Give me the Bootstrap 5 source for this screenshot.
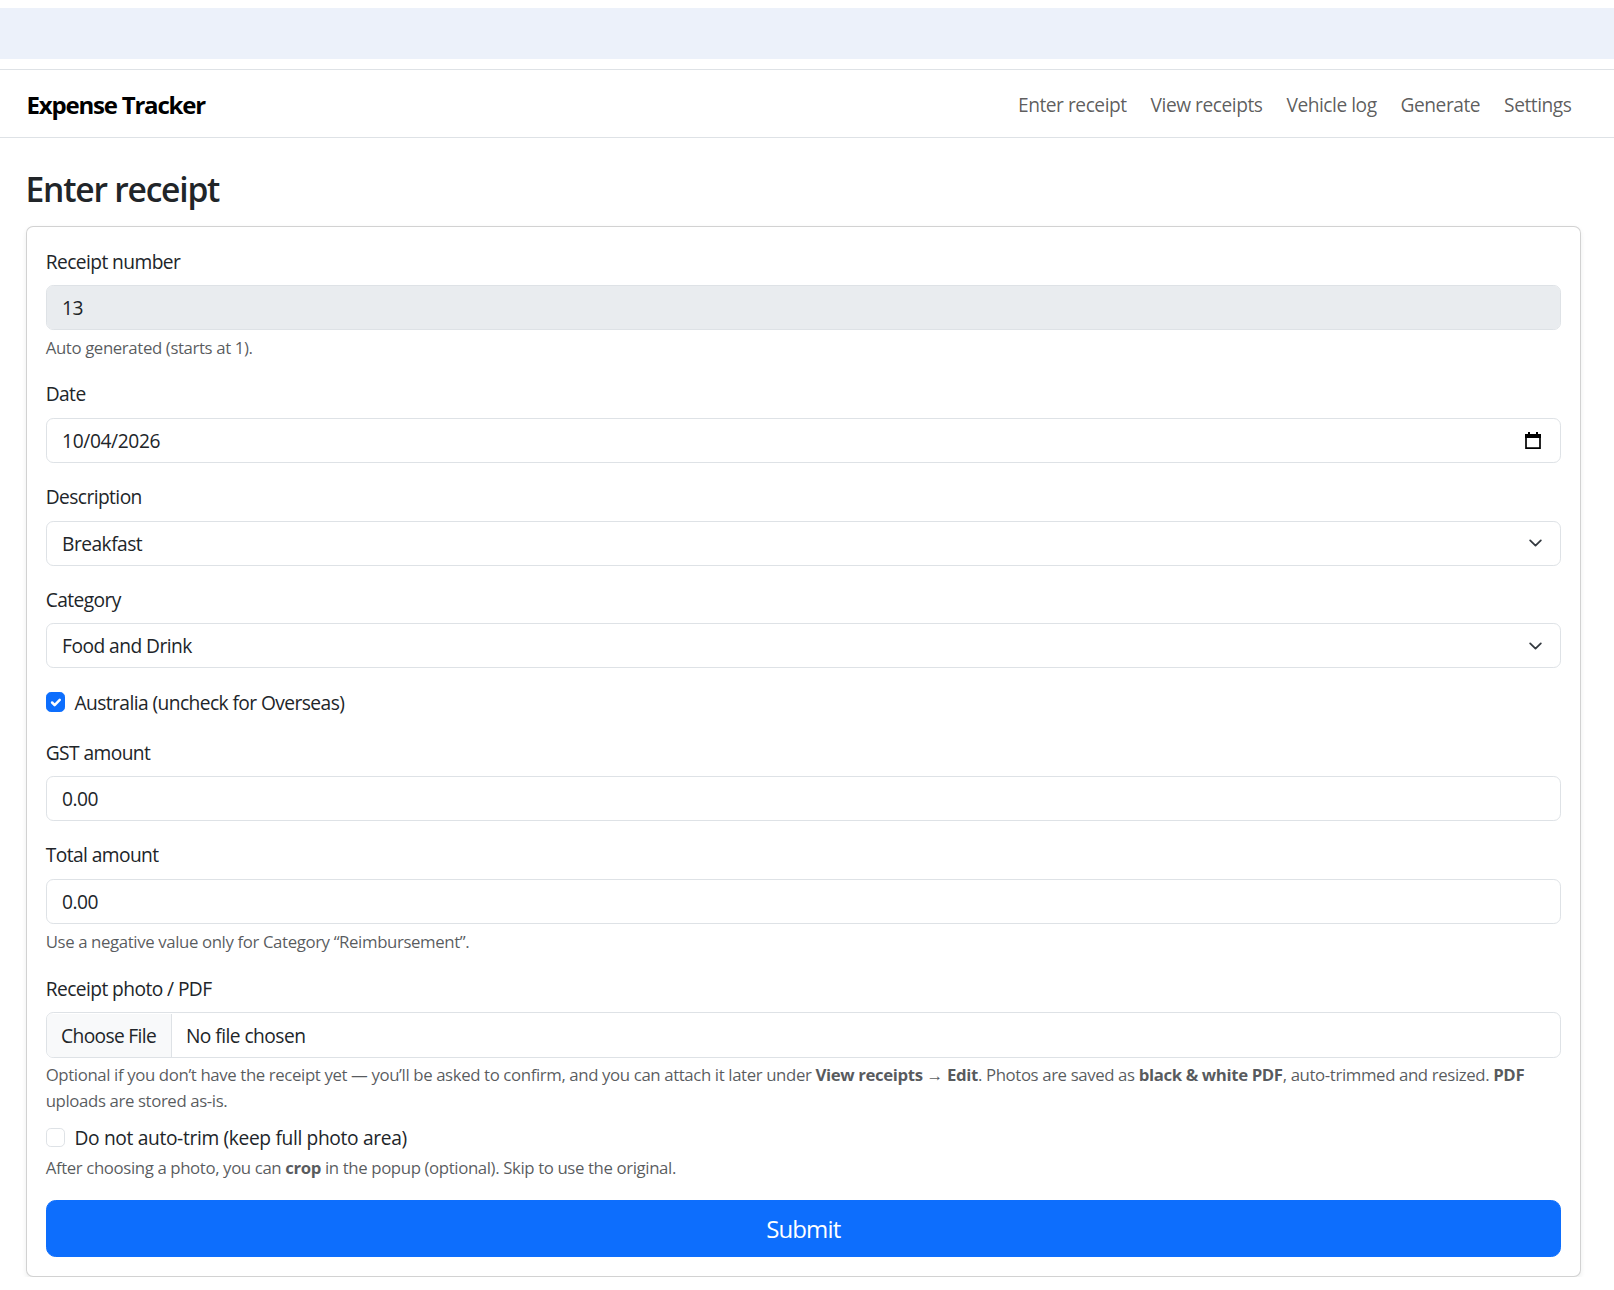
<!DOCTYPE html>
<html lang="en">
  <head>
    <meta charset="UTF-8" />
    <meta name="viewport" content="width=device-width, initial-scale=1.0" />
    <title>Enter receipt</title>
    <link href="https://cdn.jsdelivr.net/npm/bootstrap@5.3.0/dist/css/bootstrap.min.css" rel="stylesheet" />
    <style>
      html {
        font-size: 19.2px;
      }
      body {
        font-family: "Open Sans", "Noto Sans", sans-serif;
        letter-spacing: -0.025em;
      }
      .top-band {
        height: 51px;
        margin: 8px 0 10px;
        background-color: #ecf1fa;
      }
      .app-nav {
        border-top: 1px solid #dee2e6;
        border-bottom: 1px solid #dee2e6;
      }
      .app-nav .container-fluid {
        padding-left: 26.5px;
        padding-right: 33px;
      }
      .app-nav .navbar-brand {
        letter-spacing: -0.05em;
        padding-top: calc(0.3125rem + 1px);
        padding-bottom: calc(0.3125rem - 1px);
      }
      .app-nav .nav-link {
        padding-top: calc(0.5rem + 2px);
        padding-bottom: calc(0.5rem - 2px);
      }
      .page-body {
        padding-left: 25.5px;
        padding-right: 33px;
      }
      .page-title {
        font-weight: 600;
        letter-spacing: -0.036em;
        padding-top: 2px;
        margin-bottom: calc(1rem - 2px);
      }
      .form-label {
        letter-spacing: -0.03em;
        padding-top: 1px;
        margin-bottom: calc(0.5rem - 1px);
      }
      .form-check-label {
        letter-spacing: -0.03em;
        padding-top: 1px;
      }
      .form-check-label.trim-label {
        letter-spacing: -0.018em;
      }
      .form-control,
      .form-select {
        letter-spacing: -0.028em;
        padding-top: calc(0.375rem + 1px);
        padding-bottom: calc(0.375rem - 1px);
      }
      .form-control:not([type="file"]),
      .form-select {
        padding-left: calc(0.75rem + 1px);
      }
      .form-control.date-field {
        letter-spacing: -0.02em;
      }
      .form-control[type="file"]::file-selector-button {
        letter-spacing: -0.034em;
      }
      .form-select {
        background-position: right 14.4px center;
        background-size: 19.2px 14.4px;
      }
      .form-text {
        letter-spacing: -0.023em;
      }
      .btn-lg {
        letter-spacing: -0.036em;
        padding-top: calc(0.5rem + 1px);
        padding-bottom: calc(0.5rem - 1px);
      }
      .check-gap {
        margin-bottom: calc(1rem + 1px);
      }
      .total-gap {
        margin-bottom: calc(1rem + 1px);
      }
      .photo-gap {
        margin-bottom: calc(0.5rem + 1px);
      }
      .crop-note {
        margin-top: 2px;
      }
      .date-field {
        background-image: url("data:image/svg+xml,%3csvg xmlns='http://www.w3.org/2000/svg' viewBox='0 0 16 17'%3e%3cpath fill='none' stroke='%23000' stroke-width='1.7' d='M1 4.5h14v11.6H1z'/%3e%3cpath fill='%23000' d='M0 2h3V0h2v2h6V0h2v2h3v4H0z'/%3e%3c/svg%3e");
        background-repeat: no-repeat;
        background-position: right 19px center;
        background-size: 16px 17px;
      }
    </style>
  </head>
  <body>
    <div class="top-band"></div>

    <nav class="navbar navbar-expand-lg bg-white app-nav">
      <div class="container-fluid">
        <a class="navbar-brand fw-bold" href="#">Expense Tracker</a>
        <ul class="navbar-nav ms-auto flex-row">
          <li class="nav-item"><a class="nav-link px-2" href="#">Enter receipt</a></li>
          <li class="nav-item"><a class="nav-link px-2 ms-1" href="#">View receipts</a></li>
          <li class="nav-item"><a class="nav-link px-2 ms-1" href="#">Vehicle log</a></li>
          <li class="nav-item"><a class="nav-link px-2 ms-1" href="#">Generate</a></li>
          <li class="nav-item"><a class="nav-link px-2 ms-1" href="#">Settings</a></li>
        </ul>
      </div>
    </nav>

    <main class="page-body mt-4">
      <h3 class="page-title">Enter receipt</h3>
      <form class="card shadow-sm p-3">
        <div class="mb-3">
          <label class="form-label" for="receipt-number">Receipt number</label>
          <input class="form-control" id="receipt-number" value="13" disabled />
          <div class="form-text">Auto generated (starts at 1).</div>
        </div>
        <div class="mb-3">
          <label class="form-label" for="receipt-date">Date</label>
          <input class="form-control date-field" id="receipt-date" value="10/04/2026" />
        </div>
        <div class="mb-3">
          <label class="form-label" for="description">Description</label>
          <select class="form-select" id="description">
            <option>Breakfast</option>
          </select>
        </div>
        <div class="mb-3">
          <label class="form-label" for="category">Category</label>
          <select class="form-select" id="category">
            <option>Food and Drink</option>
          </select>
        </div>
        <div class="form-check check-gap">
          <input class="form-check-input" type="checkbox" id="australia" checked />
          <label class="form-check-label" for="australia">Australia (uncheck for Overseas)</label>
        </div>
        <div class="mb-3">
          <label class="form-label" for="gst">GST amount</label>
          <input class="form-control" id="gst" value="0.00" />
        </div>
        <div class="total-gap">
          <label class="form-label" for="total">Total amount</label>
          <input class="form-control" id="total" value="0.00" />
          <div class="form-text">Use a negative value only for Category “Reimbursement”.</div>
        </div>
        <div class="photo-gap">
          <label class="form-label" for="photo">Receipt photo / PDF</label>
          <input class="form-control" type="file" id="photo" />
          <div class="form-text">
            Optional if you don’t have the receipt yet — you’ll be asked to confirm, and you can attach it later under
            <strong>View receipts</strong> → <strong>Edit</strong>. Photos are saved as <strong>black &amp; white PDF</strong>,
            auto-trimmed and resized. <strong>PDF</strong> uploads are stored as-is.
          </div>
        </div>
        <div class="form-check mb-0">
          <input class="form-check-input" type="checkbox" id="no-trim" />
          <label class="form-check-label trim-label" for="no-trim">Do not auto-trim (keep full photo area)</label>
        </div>
        <div class="form-text crop-note mb-3">After choosing a photo, you can <strong>crop</strong> in the popup (optional). Skip to use the original.</div>
        <button class="btn btn-primary btn-lg w-100" type="button">Submit</button>
      </form>
    </main>

    <script src="https://cdn.jsdelivr.net/npm/bootstrap@5.3.0/dist/js/bootstrap.bundle.min.js"></script>
  </body>
</html>
